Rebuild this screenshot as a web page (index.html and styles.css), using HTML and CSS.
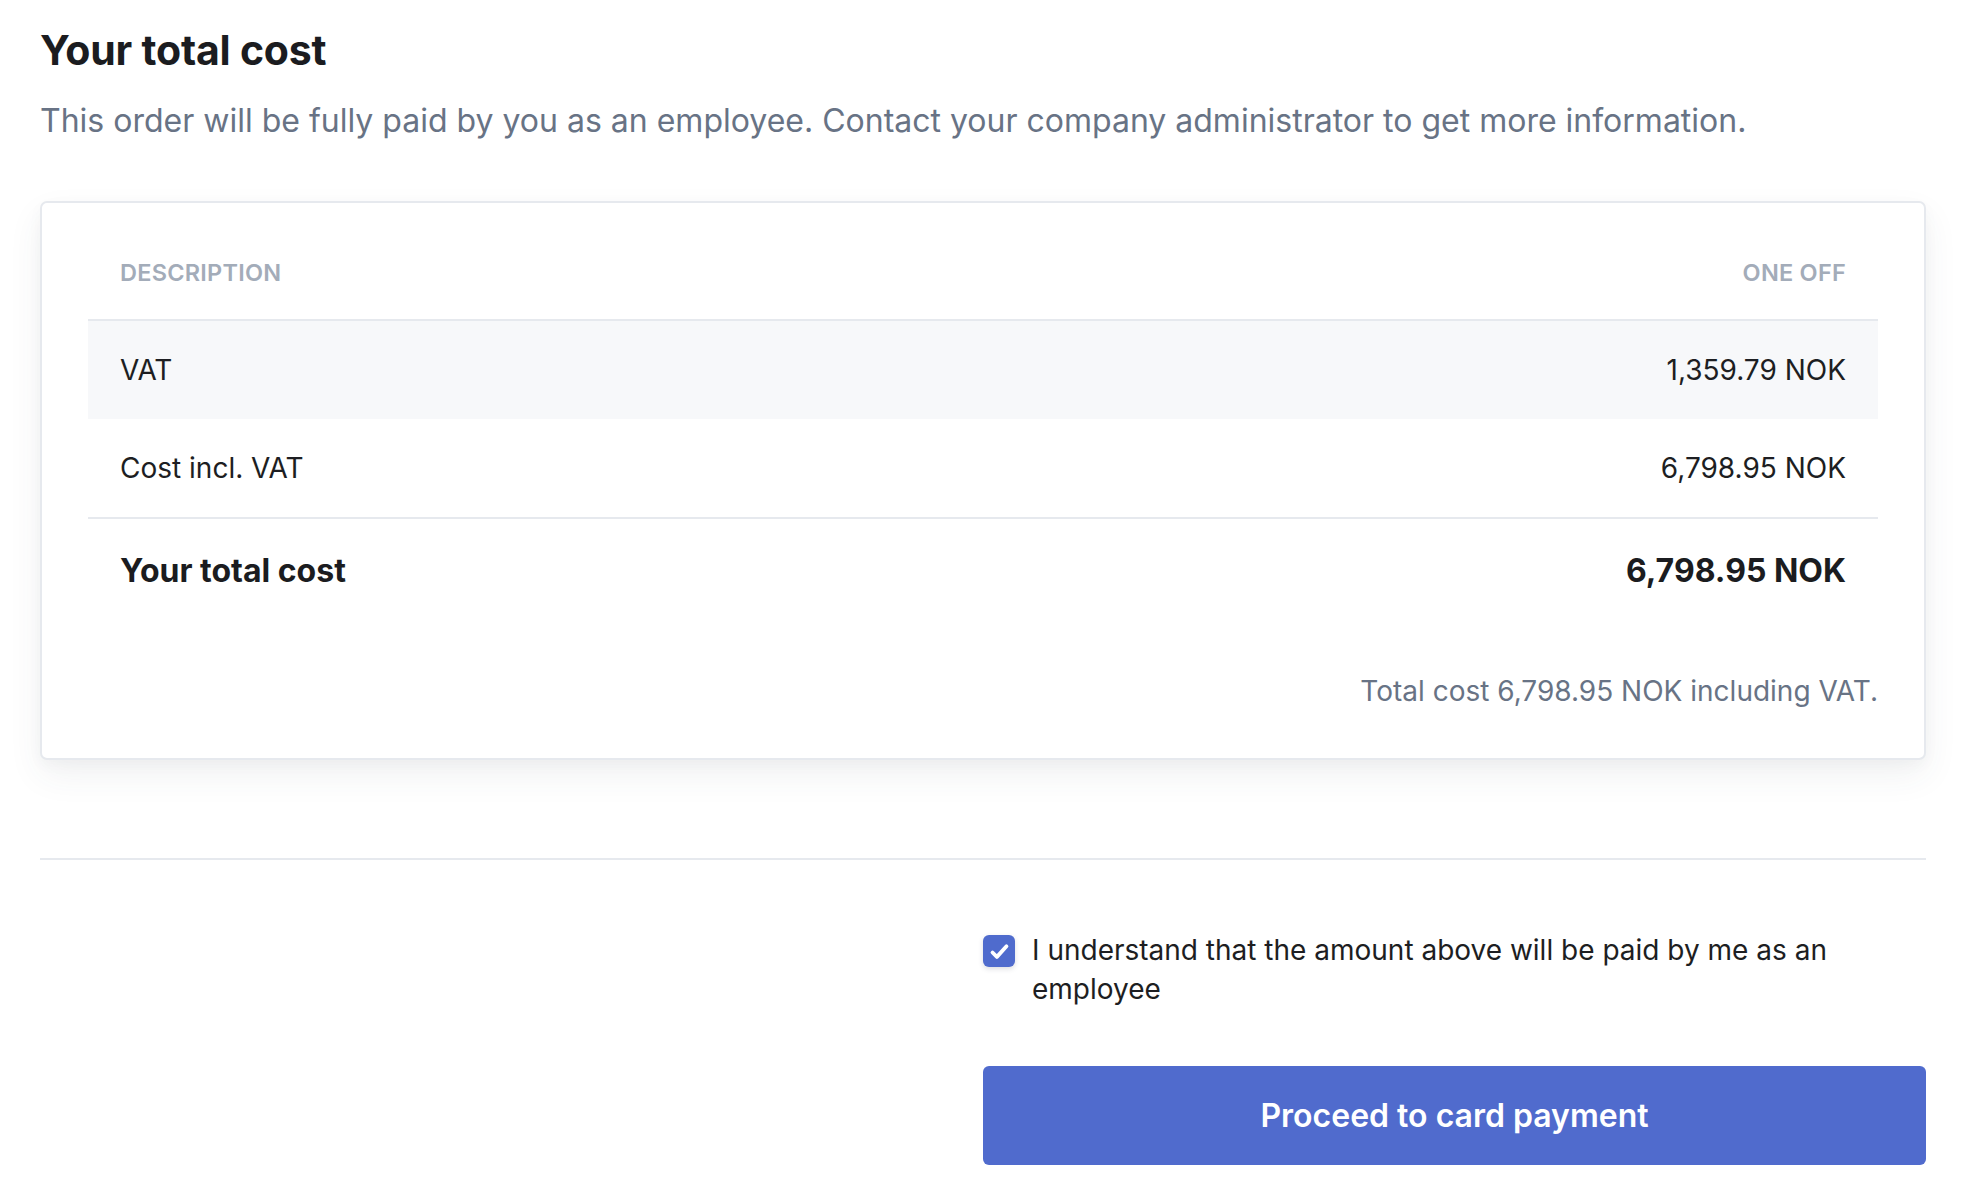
FILE: index.html
```html
<!DOCTYPE html>
<html lang="en">
<head>
<meta charset="utf-8">
<title>Your total cost</title>
<link rel="stylesheet" href="styles.css">
</head>
<body>
<main class="page">
  <h1 class="title">Your total cost</h1>
  <p class="subtitle">This order will be fully paid by you as an employee. Contact your company administrator to get more information.</p>

  <section class="card">
    <div class="table">
      <div class="row head">
        <span class="cell">DESCRIPTION</span>
        <span class="cell num">ONE OFF</span>
      </div>
      <div class="row item shaded">
        <span class="cell">VAT</span>
        <span class="cell num">1,359.79 NOK</span>
      </div>
      <div class="row item">
        <span class="cell">Cost incl. VAT</span>
        <span class="cell num">6,798.95 NOK</span>
      </div>
      <div class="row total">
        <span class="cell">Your total cost</span>
        <span class="cell num">6,798.95 NOK</span>
      </div>
    </div>
    <p class="footnote">Total cost 6,798.95 NOK including VAT.</p>
  </section>

  <hr class="divider">

  <div class="confirm">
    <div class="spacer"></div>
    <div class="actions">
      <label class="check">
        <span class="box">
          <svg viewBox="0 0 24 24" width="27" height="27" aria-hidden="true"><path d="M5.8 12.9l3.9 3.9L18.2 7.4" fill="none" stroke="#fff" stroke-width="3.4" stroke-linecap="round" stroke-linejoin="round"/></svg>
        </span>
        <span class="check-text">I understand that the amount above will be paid by me as an employee</span>
      </label>
      <button class="pay" type="button">Proceed to card payment</button>
    </div>
  </div>
</main>
</body>
</html>
```
FILE: styles.css
```css
* { box-sizing: border-box; }

html, body {
  margin: 0;
  padding: 0;
  background: #ffffff;
}

body {
  font-family: Inter, "Noto Sans", "Liberation Sans", sans-serif;
  color: #1d1e22;
}

.page {
  width: 1886px;
  margin-left: 40px;
  padding-top: 25px;
}

.title {
  margin: 0;
  font-size: 41px;
  line-height: 50px;
  font-weight: 700;
  color: #1b1c20;
  letter-spacing: -0.005em;
}

.subtitle {
  margin: 22px 0 0;
  font-size: 32px;
  line-height: 48px;
  color: #687385;
}

.card {
  margin-top: 56px;
  border: 2px solid #e6e9ee;
  border-radius: 7px;
  padding: 54px 46px 47px;
  box-shadow: 0 15px 35px rgba(60, 66, 87, 0.07), 0 5px 15px rgba(0, 0, 0, 0.03);
  background: #fff;
}

.table {
  display: flex;
  flex-direction: column;
}

.row {
  display: flex;
  justify-content: space-between;
  align-items: center;
  padding: 0 32px;
}

.head {
  font-size: 23.5px;
  line-height: 32px;
  font-weight: 600;
  color: #a3acb9;
  letter-spacing: 0.01em;
  padding-bottom: 30px;
  border-bottom: 2px solid #e6e9ee;
}

.item {
  font-size: 28px;
  line-height: 40px;
  padding-top: 29px;
  padding-bottom: 29px;
  color: #1d1e22;
}

.shaded {
  background: #f7f8fa;
}

.total {
  font-size: 32px;
  line-height: 44px;
  font-weight: 700;
  color: #1b1c20;
  padding-top: 30px;
  border-top: 2px solid #e6e9ee;
}

.footnote {
  margin: 78px 0 0;
  text-align: right;
  font-size: 28px;
  line-height: 40px;
  color: #687385;
}

.divider {
  margin: 98px 0 0;
  border: 0;
  height: 2px;
  background: #e6e9ee;
}

.confirm {
  display: grid;
  grid-template-columns: 943px 1fr;
  padding-top: 71px;
}

.actions {
  display: flex;
  flex-direction: column;
  gap: 58px;
}

.check {
  display: flex;
  align-items: flex-start;
  gap: 17px;
  font-size: 28px;
  line-height: 38.5px;
  color: #1d1e22;
}

.box {
  flex: none;
  width: 32px;
  height: 32px;
  margin-top: 4px;
  border-radius: 6px;
  background: #4f6bcd;
  display: flex;
  align-items: center;
  justify-content: center;
  box-shadow: 0 2px 5px rgba(60, 66, 87, 0.18);
}

.pay {
  display: block;
  width: 100%;
  border: 0;
  border-radius: 6px;
  background: #506bcd;
  color: #ffffff;
  font-family: inherit;
  font-size: 32px;
  line-height: 44px;
  font-weight: 600;
  padding: 27.5px 0;
  text-align: center;
  cursor: pointer;
}
```
